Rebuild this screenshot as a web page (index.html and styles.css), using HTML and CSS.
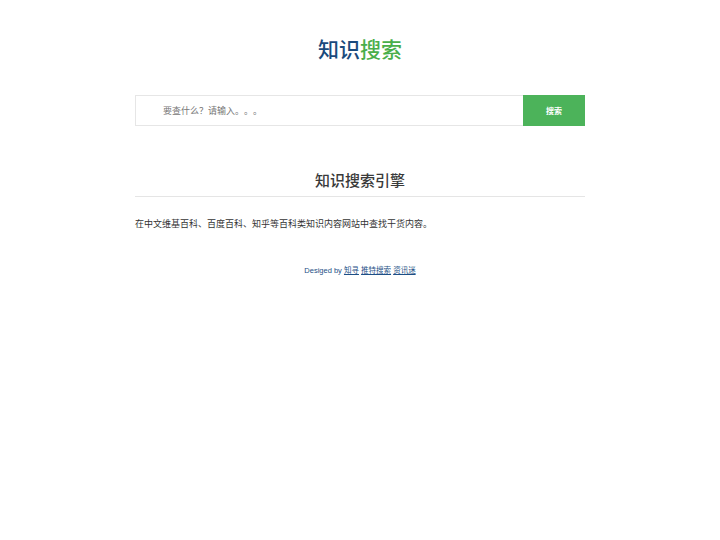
FILE: index.html
```html
<!DOCTYPE html>
<html lang="zh">
<head>
<meta charset="utf-8">
<title>知识搜索</title>
<link rel="stylesheet" href="styles.css">
</head>
<body>
<div class="wrap">
  <h1 class="logo"><span class="blue">知识</span><span class="green">搜索</span></h1>
  <form class="search">
    <input class="input" type="text" placeholder="要查什么？请输入。。。">
    <button class="btn" type="button">搜索</button>
  </form>
  <h2 class="title">知识搜索引擎</h2>
  <p class="desc">在中文维基百科、百度百科、知乎等百科类知识内容网站中查找干货内容。</p>
  <p class="foot">Desiged by <a href="#">知寻</a> <a href="#">推特搜索</a> <a href="#">资讯迷</a></p>
</div>
</body>
</html>
```
FILE: styles.css
```css
html, body { margin: 0; padding: 0; background: #fff; }
body { font-family: "Liberation Sans", "Noto Sans CJK SC", sans-serif; color: #333; text-spacing-trim: space-all; }
.wrap { width: 450px; margin: 0 auto; padding-top: 37px; }
.logo { margin: 0; text-align: center; font-size: 21px; line-height: 26px; font-weight: 500; }
.blue { color: #1a4a7c; }
.green { color: #4aae4a; }
.search { display: flex; margin-top: 32px; height: 31px; }
.input { flex: 1; box-sizing: border-box; height: 31px; border: 1px solid #e6e6e6; border-right: none; padding: 0 0 0 27px; font-size: 9px; color: #555; outline: none; font-family: inherit; text-spacing-trim: space-all; }
.input::placeholder { color: #777; }
.btn { width: 62px; height: 31px; border: none; background: #4cb35a; color: #fff; font-size: 8px; font-weight: bold; font-family: inherit; padding: 0; }
.title { margin: 44px 0 0; text-align: center; font-size: 15px; line-height: 22px; font-weight: 500; color: #3a3a3a; padding-bottom: 4px; border-bottom: 1px solid #e5e5e5; }
.desc { margin: 20px 0 0; font-size: 9px; line-height: 14px; color: #333; }
.foot { margin: 34px 0 0; text-align: center; font-size: 7.5px; line-height: 12px; color: #1d4f86; }
.foot a { color: #1d4f86; }
```
